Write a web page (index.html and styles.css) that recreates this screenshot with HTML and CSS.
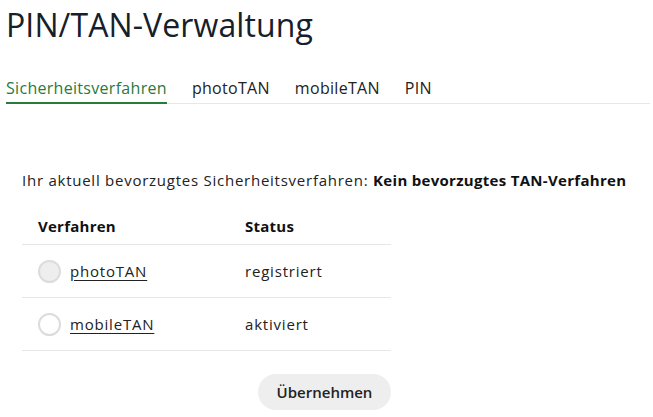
FILE: index.html
```html
<!DOCTYPE html>
<html lang="de">
<head>
<meta charset="utf-8">
<link rel="stylesheet" href="styles.css">
</head>
<body>
<div class="page">
  <h1 class="title">PIN/TAN-Verwaltung</h1>
  <nav class="tabs">
    <span class="tab active">Sicherheitsverfahren</span>
    <span class="tab">photoTAN</span>
    <span class="tab">mobileTAN</span>
    <span class="tab">PIN</span>
  </nav>
  <section class="content">
    <p class="intro">Ihr aktuell bevorzugtes Sicherheitsverfahren: <strong>Kein bevorzugtes TAN-Verfahren</strong></p>
    <div class="table">
      <div class="row head">
        <div class="c1">Verfahren</div>
        <div class="c2">Status</div>
      </div>
      <div class="row">
        <div class="c1"><span class="radio filled"></span><a class="link" href="#">photoTAN</a></div>
        <div class="c2">registriert</div>
      </div>
      <div class="row">
        <div class="c1"><span class="radio"></span><a class="link" href="#">mobileTAN</a></div>
        <div class="c2">aktiviert</div>
      </div>
      <div class="actions">
        <button class="btn">Übernehmen</button>
      </div>
    </div>
  </section>
</div>
</body>
</html>
```
FILE: styles.css
```css
* { box-sizing: border-box; }
body {
  margin: 0;
  background: #fff;
  font-family: "Open Sans", "Noto Sans", sans-serif;
  color: #1c1c1c;
}
.page {
  padding: 0 3px 0 6px;
}
.title {
  margin: 0;
  padding-top: 6px;
  font-size: 32px;
  font-weight: 400;
  line-height: 38px;
  color: #15202a;
  letter-spacing: 0.1px;
}
.tabs {
  margin-top: 32px;
  display: flex;
  gap: 25px;
  border-bottom: 1px solid #e8e8e8;
}
.tab {
  font-size: 16px;
  line-height: 24px;
  padding-bottom: 2px;
  color: #222;
  letter-spacing: 0.3px;
  border-bottom: 2px solid transparent;
  margin-bottom: -1px;
}
.tab.active {
  color: #2a7a3b;
  border-bottom-color: #2a7a3b;
}
.content {
  padding: 0 0 0 16px;
}
.intro {
  margin: 66px 0 0;
  font-size: 15px;
  line-height: 20px;
  letter-spacing: 0.75px;
  color: #222;
  white-space: nowrap;
}
.intro strong { font-weight: 700; color: #111; letter-spacing: 0.3px; }
.table {
  width: 369px;
  margin-top: 25px;
}
.row {
  display: flex;
  align-items: center;
  height: 53px;
  border-bottom: 1px solid #e6e6e6;
  font-size: 15px;
  letter-spacing: 0.8px;
  color: #222;
}
.row.head {
  height: 30px;
  align-items: flex-start;
  padding-top: 1px;
  font-weight: 700;
  letter-spacing: 0.25px;
  color: #111;
}
.c1 {
  width: 223px;
  padding-left: 16px;
  display: flex;
  align-items: center;
}
.c2 { flex: 1; }
.radio {
  flex: none;
  width: 23px;
  height: 23px;
  border-radius: 50%;
  border: 2px solid #dcdcdc;
  background: #fff;
  margin-right: 9px;
}
.radio.filled { background: #eeeeee; }
.link {
  color: #222;
  text-decoration: underline;
  text-underline-offset: 3px;
}
.actions {
  display: flex;
  justify-content: flex-end;
  margin-top: 23px;
}
.btn {
  width: 133px;
  height: 36px;
  border: none;
  border-radius: 18px;
  background: #eeeeee;
  font-family: inherit;
  font-size: 15px;
  font-weight: 600;
  color: #222;
}
```
